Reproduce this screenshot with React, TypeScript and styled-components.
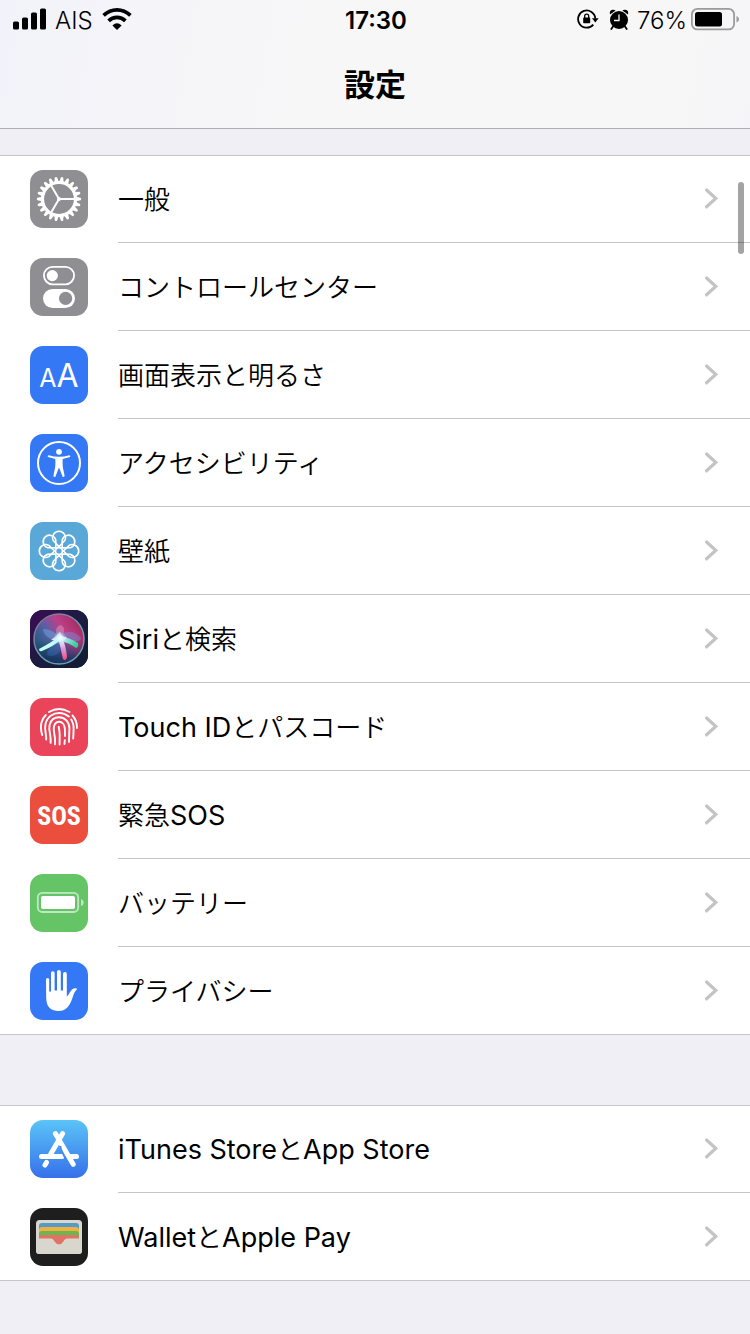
import React from "react";
import styled, { createGlobalStyle } from "styled-components";

const GlobalStyle = createGlobalStyle`
  *, *::before, *::after { box-sizing: border-box; }
  body {
    margin: 0;
    background: #f0eff5;
    color: #000;
    font-family: Inter, "Noto Sans CJK JP", sans-serif;
    -webkit-font-smoothing: antialiased;
  }
`;

const Page = styled.div`
  min-height: 100vh;
  position: relative;
`;

const Header = styled.header`
  border-bottom: 1px solid #aeaeb2;
  background: linear-gradient(100deg, #f2f2fa 0, #f7f7f8 40%, #f7f7f7 90%, #f5f4f8 100%);
`;

const StatusBar = styled.div`
  display: grid;
  grid-template-columns: 1fr auto 1fr;
  align-items: center;
  height: 38px;
  padding: 0 11px 0 13px;
`;

const StatusSide = styled.div<{ $end?: boolean }>`
  display: flex;
  align-items: center;
  justify-content: ${(p) => (p.$end ? "flex-end" : "flex-start")};
  gap: ${(p) => (p.$end ? 4 : 9)}px;
`;

const StatusText = styled.span`
  padding-top: 4px;
  font-size: 24px;
  line-height: 34px;
  font-weight: 300;
`;

const StatusIcons = styled.span`
  display: flex;
  align-items: center;
  gap: 10px;
  margin-right: 4px;
`;

const Clock = styled.time`
  padding-top: 4px;
  font-size: 24px;
  line-height: 34px;
  font-weight: 600;
`;

const Title = styled.h1`
  margin: 0;
  height: 90px;
  line-height: 94px;
  text-align: center;
  font-size: 31px;
  font-weight: 700;
`;

const Group = styled.ul<{ $first?: boolean }>`
  list-style: none;
  margin: ${(p) => (p.$first ? 26 : 70)}px 0 0;
  padding: 0;
  background: #fff;
  box-shadow: inset 0 1px #c6c6c9, inset 0 -1px #c6c6c9;
`;

const RowLink = styled.a`
  display: flex;
  gap: 30px;
  align-items: center;
  padding-left: 30px;
  color: inherit;
  text-decoration: none;
`;

const RowBody = styled.span<{ $last: boolean }>`
  flex: 1;
  display: flex;
  align-items: center;
  justify-content: space-between;
  height: 88px;
  padding-right: 32px;
  border-bottom: 1px solid ${(p) => (p.$last ? "transparent" : "#c6c6c9")};
`;

const Label = styled.span`
  padding-top: 2px;
  font-family: Inter, "Noto Sans CJK JP DemiLight", "Noto Sans CJK JP", sans-serif;
  font-size: 26px;
  line-height: 40px;
  font-weight: 350;
`;

const Latin = styled.span`
  font-size: 27px;
  font-weight: 400;
`;

const Tile = styled.span<{ $bg: string }>`
  flex: none;
  display: flex;
  align-items: center;
  justify-content: center;
  width: 58px;
  height: 58px;
  border-radius: 13px;
  overflow: hidden;
  background: ${(p) => p.$bg};
  color: #fff;
`;

const LetterPair = styled.span`
  display: flex;
  align-items: baseline;
  padding-top: 4px;
  line-height: 40px;
`;

const Letter = styled.span<{ $size: number }>`
  font-size: ${(p) => p.$size}px;
  font-weight: 400;
`;

const SosText = styled.span`
  padding-top: 2px;
  font-family: "Roboto Condensed", "Open Sans", sans-serif;
  font-size: 26px;
  line-height: 58px;
  font-weight: 700;
`;

const ScrollThumb = styled.div`
  position: absolute;
  top: 182px;
  right: 6px;
  width: 6px;
  height: 72px;
  border-radius: 3px;
  background: rgba(0, 0, 0, 0.36);
`;

const Glyph = ({ children }: { children: React.ReactNode }) => (
  <svg width="58" height="58" viewBox="0 0 58 58" fill="none" aria-hidden="true">
    {children}
  </svg>
);

const Chevron = () => (
  <svg width="14" height="22" viewBox="0 0 14 22" fill="none" aria-hidden="true">
    <path d="M2.6 2 L11.7 10.4 L2.6 18.8" stroke="#c4c4c7" strokeWidth="3.2" strokeLinecap="round" strokeLinejoin="miter" />
  </svg>
);

const GearIcon = () => (
  <Glyph>
    {Array.from({ length: 22 }, (_, i) => (
      <path key={i} d="M46 26.8 L50.6 27.8 Q52 29 50.6 30.2 L46 31.2Z" fill="#fff" transform={`rotate(${(i * 360) / 22} 29 29)`} />
    ))}
    <circle cx="29" cy="29" r="16.5" stroke="#fff" strokeWidth="3.2" />
    <circle cx="29" cy="29" r="2" fill="#fff" />
    {[0, 120, 240].map((a) => (
      <path key={a} d="M29 29H45" stroke="#fff" strokeWidth="2" transform={`rotate(${a} 29 29)`} />
    ))}
  </Glyph>
);

const TogglesIcon = () => (
  <Glyph>
    <rect x="13.9" y="8.9" width="30.2" height="17.4" rx="8.7" stroke="#fff" strokeWidth="1.8" />
    <circle cx="22.3" cy="17.6" r="5.6" fill="#fff" />
    <rect x="13" y="31" width="32" height="19" rx="9.5" fill="#fff" />
    <circle cx="35.6" cy="40.4" r="6.6" fill="#8e8e93" />
  </Glyph>
);

const AccessibilityIcon = () => (
  <Glyph>
    <circle cx="29" cy="29" r="21" stroke="#fff" strokeWidth="2" />
    <circle cx="29" cy="17.8" r="2.9" fill="#fff" />
    <path
      d="M18.8 21.3 Q24 22.8 29 22.8 Q34 22.8 39.2 21.3 Q40.6 21.4 40.2 23 L32.7 25.1 Q32.4 30 32.8 33 L34.6 41.8 Q34.2 43.6 32.6 42.8 L29.4 34.2 H28.6 L25.4 42.8 Q23.8 43.6 23.4 41.8 L25.2 33 Q25.6 30 25.3 25.1 L17.8 23 Q17.4 21.4 18.8 21.3Z"
      fill="#fff"
    />
  </Glyph>
);

const FlowerIcon = () => (
  <Glyph>
    <circle cx="29" cy="29" r="3.5" stroke="#fff" strokeWidth="1.8" />
    {Array.from({ length: 8 }, (_, i) => (
      <path
        key={i}
        d="M29 24.6 L23.4 18.8 A6.4 6.4 0 1 1 34.6 18.8 Z"
        stroke="#fff"
        strokeWidth="1.6"
        strokeLinejoin="round"
        transform={`rotate(${i * 45} 29 29)`}
      />
    ))}
  </Glyph>
);

const SiriIcon = () => (
  <Glyph>
    <defs>
      <linearGradient id="siriBg" x1="0" y1="0" x2="1" y2="1">
        <stop offset="0" stopColor="#3b0d55" />
        <stop offset="0.5" stopColor="#1c1b40" />
        <stop offset="1" stopColor="#101d33" />
      </linearGradient>
      <linearGradient id="siriOrb" x1="0.1" y1="0.7" x2="0.9" y2="0.2">
        <stop offset="0" stopColor="#1f5d80" />
        <stop offset="0.35" stopColor="#595fa5" />
        <stop offset="0.65" stopColor="#bd4088" />
        <stop offset="1" stopColor="#a52d65" />
      </linearGradient>
      <linearGradient id="siriShade" x1="0" y1="0" x2="0" y2="1">
        <stop offset="0.5" stopColor="#17364d" stopOpacity="0" />
        <stop offset="0.9" stopColor="#142b58" stopOpacity="0.8" />
      </linearGradient>
      <linearGradient id="siriRing" x1="0" y1="0" x2="1" y2="1">
        <stop offset="0" stopColor="#97618f" />
        <stop offset="0.5" stopColor="#6d98ae" />
        <stop offset="1" stopColor="#62a5ae" />
      </linearGradient>
      <radialGradient id="siriGlow">
        <stop offset="0" stopColor="#fff" />
        <stop offset="0.35" stopColor="#d8f5ff" stopOpacity="0.75" />
        <stop offset="1" stopColor="#7ad5ef" stopOpacity="0" />
      </radialGradient>
      <linearGradient id="siriPink" x1="0" y1="0" x2="0" y2="1">
        <stop offset="0.1" stopColor="#fff" />
        <stop offset="0.5" stopColor="#d99be0" />
        <stop offset="1" stopColor="#ff4672" />
      </linearGradient>
      <linearGradient id="siriGreen" x1="0" y1="0" x2="1" y2="0.4">
        <stop offset="0.1" stopColor="#fff" />
        <stop offset="0.5" stopColor="#8fe3dc" />
        <stop offset="1" stopColor="#35cf9c" />
      </linearGradient>
      <filter id="siriSoft">
        <feGaussianBlur stdDeviation="0.6" />
      </filter>
    </defs>
    <rect width="58" height="58" fill="url(#siriBg)" />
    <circle cx="29" cy="29" r="25" fill="url(#siriOrb)" />
    <circle cx="29" cy="29" r="25" fill="url(#siriShade)" />
    <g filter="url(#siriSoft)">
      <path d="M29 26 Q20 18 13 19 Q13 25 21 29 L29 30Z" fill="#6fa6dd" opacity="0.5" />
      <path d="M27 27 Q24 16 31 15 Q37 18 31 30Z" fill="#f3a9cf" opacity="0.4" />
      <path d="M30 25 Q42 17 51 28 Q50 32 44 31 Q36 32 30 29Z" fill="#6c95e0" opacity="0.45" />
      <path d="M29 28 Q18 36 17 45 Q25 48 30 41Z" fill="#3d78cf" opacity="0.35" />
      <path d="M31 25 Q24 31 9 39 Q9 42 12 41 Q24 36 32 29Z" fill="#c2fff6" />
      <path d="M28 27 L33 49 Q36 52 37 47 Q36 36 32 27Z" fill="url(#siriPink)" />
      <path d="M28 27 Q40 27 48 33 Q49 37 46 38 Q40 33 30 31Z" fill="url(#siriGreen)" />
      <path d="M21 30 Q27 26 30 22 Q31 27 37 27 L33 31Z" fill="#fff" opacity="0.85" />
    </g>
    <circle cx="30" cy="28" r="7" fill="url(#siriGlow)" />
    <circle cx="29" cy="29" r="25" stroke="url(#siriRing)" strokeWidth="1.5" />
  </Glyph>
);

const FingerprintIcon = () => (
  <Glyph>
    <g stroke="#fff" strokeWidth="1.9" strokeLinecap="round">
      <path d="M19 14 Q29 8 39.5 14" />
      <path d="M12.2 37 Q10 30 11.5 24.5 Q12.8 20 15.8 17" />
      <path d="M42.5 17.5 Q47 22.5 47 30" />
      <path d="M16.2 41.5 C16.6 36 14 32 15.5 26 C17.4 18 24 15 29 15 Q34.5 15 38.8 18.6" />
      <path d="M41.2 21.5 Q44 26 43.6 32 L43.2 40.5" />
      <path d="M20.6 44.8 C21.4 37 18.2 33 19.6 27 C21 21.5 25 19.3 29 19.3 C35 19.3 39.2 24 39.4 30 L39 44" />
      <path d="M25 46.3 C26 37 22.5 33 24 28.2 C25 25 27 23.8 29.2 23.8 C32.3 23.8 34.6 27 34.9 31 L35 38" />
      <path d="M29.6 46.6 L29.7 37 Q29.5 32 28.7 28.7" />
      <path d="M34.8 42.2 L34.5 46" />
    </g>
  </Glyph>
);

const BatteryIcon = () => (
  <Glyph>
    <rect x="7.8" y="18.8" width="40.4" height="19.2" rx="4.5" stroke="#fff" strokeOpacity="0.6" strokeWidth="1.8" />
    <rect x="11" y="22" width="34" height="13" rx="2" fill="#fff" />
    <path d="M51 25 Q53.8 26 53.8 28.5 Q53.8 31 51 32Z" fill="#fff" opacity="0.6" />
  </Glyph>
);

const HandIcon = () => (
  <Glyph>
    <path
      d="M16 17.5 a1.6 1.6 0 0 1 3.2 0 V29.5 H21 V11 a1.8 1.8 0 0 1 3.6 0 V28.5 H27 V9.8 a1.9 1.9 0 0 1 3.8 0 V28.5 H33 V12 a1.9 1.9 0 0 1 3.8 0 V34.5 C39 33 40 29 42.2 27.3 C44 26 46.5 26 47.3 27 C45 29 44 31 43 34.2 C40.5 42.5 37 49 28.5 49 C20 49 16.4 44 16.2 36Z"
      fill="#fff"
    />
  </Glyph>
);

const AppStoreIcon = () => (
  <Glyph>
    <g stroke="#fff" strokeWidth="5" strokeLinecap="round">
      <path d="M32.6 13.6 L20.6 34.2" />
      <path d="M25.4 13.6 L43.2 44.3" />
      <path d="M11.5 36.5 H32" />
      <path d="M40 36.5 H46.5" />
      <path d="M16.5 42.5 L15 45" />
    </g>
    <path d="M30.5 26 Q31 31 36 39.8" stroke="#418cea" strokeWidth="1.5" />
  </Glyph>
);

const WalletIcon = () => (
  <Glyph>
    <rect x="6" y="12" width="46" height="34" rx="3.5" fill="#d9d7cd" />
    <path d="M9 37 V18 Q9 15 12 15 H46 Q49 15 49 18 V37Z" fill="#549bc9" />
    <path d="M9 37 V22 Q9 19 12 19 H46 Q49 19 49 22 V37Z" fill="#f2b13c" />
    <path d="M9 37 V26 Q9 23 12 23 H46 Q49 23 49 26 V37Z" fill="#6cb651" />
    <path d="M9 37 V30 Q9 27 12 27 H46 Q49 27 49 30 V37Z" fill="#e27264" />
    <path d="M6 30.5 H20.5 C23 30.5 23.5 32 24.8 33.8 C27 37.2 31 37.2 33.2 33.8 C34.5 32 35 30.5 37.5 30.5 H52 V42.5 Q52 46 48.5 46 H9.5 Q6 46 6 42.5Z" fill="#d9d7cd" />
  </Glyph>
);

const SignalIcon = () => (
  <svg width="33" height="22" viewBox="0 0 33 22" aria-label="signal">
    <rect x="0" y="13.5" width="6" height="8" rx="1.6" />
    <rect x="9" y="9.5" width="6" height="12" rx="1.6" />
    <rect x="18" y="4.5" width="6" height="17" rx="1.6" />
    <rect x="27" y="0.5" width="6" height="21" rx="1.6" />
  </svg>
);

const WifiIcon = () => (
  <svg width="30" height="22" viewBox="0 0 30 22" fill="none" aria-label="wifi">
    <path d="M1.6 7.4 Q7.5 1.9 15 1.9 Q22.5 1.9 28.4 7.4" stroke="#000" strokeWidth="3.8" />
    <path d="M6.6 12.8 Q10.2 9.4 15 9.4 Q19.8 9.4 23.4 12.8" stroke="#000" strokeWidth="3.8" />
    <path d="M10.4 17.4 Q15 13 19.6 17.4 L15 22Z" fill="#000" />
  </svg>
);

const RotationLockIcon = () => (
  <svg width="22" height="20" viewBox="0 0 22 20" fill="none" aria-label="rotation lock">
    <path d="M16.3 15.6 A8.6 8.6 0 1 1 18.3 9.5" stroke="#000" strokeWidth="1.8" />
    <path d="M15 9.3 H21.6 L18.3 13.6Z" fill="#000" />
    <rect x="6.2" y="8.6" width="7" height="5.6" rx="0.8" fill="#000" />
    <path d="M7.7 9 V7.2 a2 2 0 0 1 4 0 V9" stroke="#000" strokeWidth="1.3" />
  </svg>
);

const AlarmIcon = () => (
  <svg width="20" height="21" viewBox="0 0 20 21" fill="none" aria-label="alarm">
    <circle cx="10" cy="11" r="9" fill="#000" />
    <path d="M1 5.5 Q0 1.5 3.5 0.8 Q5.5 0.6 6.6 1.6Z M19 5.5 Q20 1.5 16.5 0.8 Q14.5 0.6 13.4 1.6Z" fill="#000" />
    <path d="M4 17.5 L2.3 20 M16 17.5 L17.7 20" stroke="#000" strokeWidth="1.8" strokeLinecap="round" />
    <path d="M10 5.5 V11.5 H5" stroke="#f7f7f7" strokeWidth="1.3" />
  </svg>
);

const StatusBatteryIcon = () => (
  <svg width="48" height="24" viewBox="0 0 48 24" fill="none" aria-label="battery">
    <rect x="0.9" y="1.9" width="42.2" height="20.5" rx="5.5" stroke="#9b9b9d" strokeWidth="1.8" />
    <rect x="4" y="5" width="27" height="14.5" rx="2.5" fill="#000" />
    <path d="M45.5 9 Q48 10 48 12.2 Q48 14.5 45.5 15.5Z" fill="#9b9b9d" />
  </svg>
);

type Item = { label: React.ReactNode; bg: string; icon: React.ReactNode };

const mainItems: Item[] = [
  { label: "一般", bg: "#8e8e93", icon: <GearIcon /> },
  { label: "コントロールセンター", bg: "#8e8e93", icon: <TogglesIcon /> },
  {
    label: "画面表示と明るさ",
    bg: "#3478f6",
    icon: (
      <LetterPair aria-hidden="true">
        <Letter $size={25}>A</Letter>
        <Letter $size={32}>A</Letter>
      </LetterPair>
    ),
  },
  { label: "アクセシビリティ", bg: "#3478f6", icon: <AccessibilityIcon /> },
  { label: "壁紙", bg: "#5aa8d8", icon: <FlowerIcon /> },
  { label: <><Latin>Siri</Latin>と検索</>, bg: "#1c1b40", icon: <SiriIcon /> },
  { label: <><Latin>Touch ID</Latin>とパスコード</>, bg: "#ea445a", icon: <FingerprintIcon /> },
  { label: <>緊急<Latin>SOS</Latin></>, bg: "#eb4e3d", icon: <SosText aria-hidden="true">SOS</SosText> },
  { label: "バッテリー", bg: "#65c466", icon: <BatteryIcon /> },
  { label: "プライバシー", bg: "#3478f6", icon: <HandIcon /> },
];

const storeItems: Item[] = [
  {
    label: <><Latin>iTunes Store</Latin>と<Latin>App Store</Latin></>,
    bg: "linear-gradient(#5ac4f7, #3670ea)",
    icon: <AppStoreIcon />,
  },
  { label: <><Latin>Wallet</Latin>と<Latin>Apple Pay</Latin></>, bg: "#1e1e1e", icon: <WalletIcon /> },
];

const SettingsGroup = ({ items, first }: { items: Item[]; first?: boolean }) => (
  <Group $first={first}>
    {items.map((item, i) => (
      <li key={i}>
        <RowLink href="#">
          <Tile $bg={item.bg}>{item.icon}</Tile>
          <RowBody $last={i === items.length - 1}>
            <Label>{item.label}</Label>
            <Chevron />
          </RowBody>
        </RowLink>
      </li>
    ))}
  </Group>
);

export default function App() {
  return (
    <Page lang="ja">
      <GlobalStyle />
      <Header>
        <StatusBar>
          <StatusSide>
            <SignalIcon />
            <StatusText>AIS</StatusText>
            <WifiIcon />
          </StatusSide>
          <Clock>17:30</Clock>
          <StatusSide $end>
            <StatusIcons>
              <RotationLockIcon />
              <AlarmIcon />
            </StatusIcons>
            <StatusText>76%</StatusText>
            <StatusBatteryIcon />
          </StatusSide>
        </StatusBar>
        <Title>設定</Title>
      </Header>
      <main>
        <SettingsGroup items={mainItems} first />
        <SettingsGroup items={storeItems} />
      </main>
      <ScrollThumb />
    </Page>
  );
}
